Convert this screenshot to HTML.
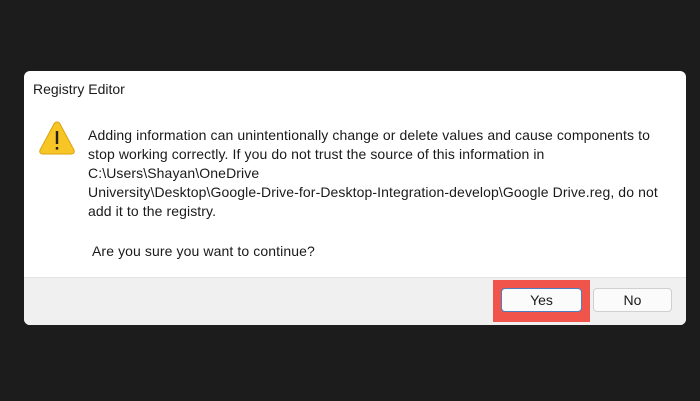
<!DOCTYPE html>
<html><head><style>
body{margin:0;width:700px;height:401px;background:#1c1c1c;font-family:"Liberation Sans",sans-serif;overflow:hidden;position:relative}
.dlg{position:absolute;left:24px;top:71px;width:662px;height:254px;background:#fff;border-radius:6px;overflow:hidden}
.title{position:absolute;left:9px;top:10px;font-size:14px;color:#1a1a1a}
.txt{position:absolute;left:64px;top:55px;width:595px;font-size:14px;line-height:19px;color:#1a1a1a;white-space:nowrap;letter-spacing:0.1px}
.foot{position:absolute;left:0;top:206px;width:662px;height:48px;background:#f0f0f0;border-top:1px solid #e3e3e3}
.red{position:absolute;left:493px;top:280px;width:97px;height:42px;background:#f0544a}
.btn{position:absolute;height:24px;background:#fbfbfb;border:1px solid #d0d0d0;border-radius:4px;font-size:14px;text-align:center;line-height:23px;color:#1a1a1a;box-sizing:border-box}
</style></head><body>
<div class="dlg">
<div class="title">Registry Editor</div>
<svg style="position:absolute;left:14px;top:49px" width="38" height="36" viewBox="0 0 38 36"><path d="M19 2 Q21 2 22 4 L36 30 Q37 34 33 34 L5 34 Q1 34 2 30 L16 4 Q17 2 19 2Z" fill="#f7c526" stroke="#d9a20a" stroke-width="1"/><rect x="17.8" y="11" width="2.4" height="13" fill="#222"/><rect x="17.8" y="27" width="2.4" height="2.6" fill="#222"/></svg>
<div class="txt">Adding information can unintentionally change or delete values and cause components to<br>stop working correctly. If you do not trust the source of this information in<br>C:\Users\Shayan\OneDrive<br>University\Desktop\Google-Drive-for-Desktop-Integration-develop\Google Drive.reg, do not<br>add it to the registry.<br><div style="height:21px"></div>&nbsp;Are you sure you want to continue?</div>
<div class="foot"></div>
</div>
<div class="red"></div>
<div class="btn" style="left:501px;top:288px;width:81px;border:1px solid #4a7fc4;">Yes</div>
<div class="btn" style="left:593px;top:288px;width:79px;">No</div>
</body></html>
